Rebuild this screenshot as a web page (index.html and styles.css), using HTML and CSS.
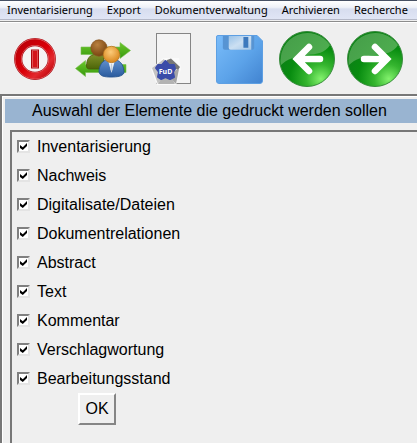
FILE: index.html
```
<!DOCTYPE html>
<html lang="de">
<head>
  <meta charset="UTF-8" />
  <meta name="viewport" content="width=device-width, initial-scale=1" />
  <title>FuD - Druckauswahl</title>
  <link rel="stylesheet" href="styles.css">
</head>
<body>
  <nav class="menubar">
    <button type="button">Inventarisierung</button>
    <button type="button">Export</button>
    <button type="button">Dokumentverwaltung</button>
    <button type="button">Archivieren</button>
    <button type="button">Recherche</button>
  </nav>

  <div class="toolbar">
    <button type="button" class="tool tool-power" aria-label="Beenden">
      <svg width="42" height="42" viewBox="0 0 42 42">
        <defs>
          <linearGradient id="red" x1="0" y1="0" x2="1" y2="1">
            <stop offset="0" stop-color="#b80008" />
            <stop offset="0.5" stop-color="#da0008" />
            <stop offset="0.75" stop-color="#e22a2e" />
            <stop offset="1" stop-color="#bc0008" />
          </linearGradient>
        </defs>
        <circle cx="21" cy="21" r="16.8" fill="#f5f3f3" stroke="#b01018" stroke-width="8.2" />
        <circle cx="21" cy="21" r="16.8" fill="none" stroke="#e87878" stroke-width="6.8" />
        <circle cx="21" cy="21" r="16.8" fill="none" stroke="url(#red)" stroke-width="5.8" />
        <rect x="17.5" y="12" width="7" height="18" fill="#f09090" stroke="#a80810" />
        <rect x="18.500" y="13" width="5" height="16" fill="#d4141a" />
      </svg>
    </button>
    <button type="button" class="tool tool-users" aria-label="Benutzer wechseln">
      <svg width="56" height="40" viewBox="0 0 56 40">
        <defs>
          <linearGradient id="arrow" x1="0" y1="0" x2="0" y2="1">
            <stop offset="0" stop-color="#6cc82c" />
            <stop offset="1" stop-color="#36980c" />
          </linearGradient>
          <radialGradient id="brown" cx="0.4" cy="0.3" r="0.7">
            <stop offset="0" stop-color="#b98040" />
            <stop offset="1" stop-color="#794510" />
          </radialGradient>
          <radialGradient id="orange" cx="0.45" cy="0.35" r="0.65">
            <stop offset="0" stop-color="#fccb7a" />
            <stop offset="1" stop-color="#d9861c" />
          </radialGradient>
          <linearGradient id="olive" x1="0" y1="0" x2="0" y2="1">
            <stop offset="0" stop-color="#80902a" />
            <stop offset="1" stop-color="#4c6508" />
          </linearGradient>
          <linearGradient id="shirt" x1="0" y1="0" x2="0" y2="1">
            <stop offset="0" stop-color="#608fcc" />
            <stop offset="1" stop-color="#2a5b9e" />
          </linearGradient>
        </defs>
        <path d="M6 8H45V3.500L55.500 11.500 45 19.500V15.500H6Z" fill="url(#arrow)" stroke="#79bd50" stroke-width="0.6" />
        <path d="M51 25.500H10.500V21.500L0.500 29.500 10.500 37.500V33.500H51Z" fill="url(#arrow)" stroke="#79bd50" stroke-width="0.6" />
        <path d="M11.500 27C11.500 20 15 15.500 20 15.500H29L29 30H15C12.500 30 11.500 29 11.500 27Z" fill="url(#olive)" stroke="#465808" stroke-width="0.8" />
        <circle cx="24" cy="9" r="8.200" fill="url(#brown)" stroke="#875320" stroke-width="0.7" />
        <path d="M24 33C24 26 28 21 32 21H41C46 22 49 27 49 34C47 37.500 42 38 36 38C30 38 25 37.500 24 33Z" fill="url(#shirt)" stroke="#275590" stroke-width="0.9" />
        <path d="M33.500 23L36.500 34 39.500 23Z" fill="#eef3f8" />
        <path d="M36 25H37L37.500 30 36.500 33 35.500 30Z" fill="#c2ccd8" />
        <circle cx="36.500" cy="15.500" r="8.200" fill="url(#orange)" stroke="#b97722" stroke-width="0.8" />
      </svg>
    </button>
    <button type="button" class="tool tool-document" aria-label="FuD-Dokument">
      <svg width="41" height="53" viewBox="0 0 41 53">
        <rect x="5.500" y="0.500" width="34" height="50" fill="#f4f4f4" stroke="#858585" />
        <path d="M12 25L28 25 30 36 25 52H6L0 36Z" fill="#fafafa" />
        <path d="M1 35L13 26 15 31 8 37 10 46 7 51Z" fill="#c3c3c3" />
        <path d="M16 27L20 25.500 29 34 27 37 16 32Z" fill="#777" />
        <path d="M28 36L25 51 20 46 23 38Z" fill="#a6a6a6" />
        <path d="M7 51L11 44H20L24 51Z" fill="#b3b3b3" />
        <path d="M14.500 28L18 32 23 32 24 36 22 39 23 44 19 46 14.500 44 10 46 7 44 8 39 5 35 7 32 11 32Z" fill="#3b4ca9" stroke="#3b4ca9" stroke-width="2" stroke-linejoin="round" />
        <text x="14.500" y="41" text-anchor="middle" class="fud-label">FuD</text>
      </svg>
    </button>
    <button type="button" class="tool tool-save" aria-label="Speichern">
      <svg width="47" height="49" viewBox="0 0 48 50">
        <defs>
          <linearGradient id="disk" x1="0" y1="0" x2="1" y2="1">
            <stop offset="0" stop-color="#7abcfa" />
            <stop offset="0.55" stop-color="#5ca3e9" />
            <stop offset="1" stop-color="#4183d0" />
          </linearGradient>
          <linearGradient id="metal" x1="0" y1="0" x2="1" y2="1">
            <stop offset="0" stop-color="#99c2e8" />
            <stop offset="0.5" stop-color="#cbdff2" />
            <stop offset="1" stop-color="#a4c7e8" />
          </linearGradient>
        </defs>
        <path d="M2 0.500H42L47.500 6V47Q47.500 49.500 45 49.500H3Q0.500 49.500 0.500 47V2Q0.500 0.500 2 0.500Z" fill="url(#disk)" stroke="#5b9ee2" />
        <path d="M7 1H39V13Q39 15 37 15H9Q7 15 7 13Z" fill="#5794d3" />
        <path d="M13 1H36V15H15Q13 15 13 13Z" fill="url(#metal)" />
        <rect x="28" y="2" width="5" height="11" fill="#3d79bd" />
      </svg>
    </button>
    <button type="button" class="tool tool-back" aria-label="Zurück">
      <svg width="56" height="56" viewBox="0 0 56 56">
        <defs>
          <radialGradient id="green" cx="0.75" cy="0.86" r="0.75">
            <stop offset="0" stop-color="#83f26d" />
            <stop offset="0.35" stop-color="#35b52f" />
            <stop offset="0.75" stop-color="#088c10" />
            <stop offset="1" stop-color="#0b8315" />
          </radialGradient>
          <linearGradient id="gloss" x1="0" y1="0" x2="1" y2="0.6">
            <stop offset="0" stop-color="#449c48" />
            <stop offset="1" stop-color="#4fae50" />
          </linearGradient>
        </defs>
        <circle cx="28" cy="28" r="27.500" fill="url(#green)" stroke="#398b3d" />
        <path d="M2 34A27 27 0 0 1 51 14C46 22 38 23 28 24C17 25 8 28 2 34Z" fill="url(#gloss)" />
        <path d="M30 16L18 28L30 40M19 28H41" fill="none" stroke="#fff" stroke-width="6.500" stroke-linecap="round" />
      </svg>
    </button>
    <button type="button" class="tool tool-next" aria-label="Weiter">
      <svg width="56" height="56" viewBox="0 0 56 56">
        <circle cx="28" cy="28" r="27.500" fill="url(#green)" stroke="#398b3d" />
        <path d="M2 34A27 27 0 0 1 51 14C46 22 38 23 28 24C17 25 8 28 2 34Z" fill="url(#gloss)" />
        <path d="M28 16L40 28L28 40M39 28H17" fill="none" stroke="#fff" stroke-width="6.500" stroke-linecap="round" />
      </svg>
    </button>
  </div>

  <main class="window">
    <h1>Auswahl der Elemente die gedruckt werden sollen</h1>

    <form class="options">
      <label><input type="checkbox" checked /> Inventarisierung</label>
      <label><input type="checkbox" checked /> Nachweis</label>
      <label><input type="checkbox" checked /> Digitalisate/Dateien</label>
      <label><input type="checkbox" checked /> Dokumentrelationen</label>
      <label><input type="checkbox" checked /> Abstract</label>
      <label><input type="checkbox" checked /> Text</label>
      <label><input type="checkbox" checked /> Kommentar</label>
      <label><input type="checkbox" checked /> Verschlagwortung</label>
      <label><input type="checkbox" checked /> Bearbeitungsstand</label>
      <button type="button" class="ok">OK</button>
    </form>
  </main>
</body>
</html>
```

FILE: styles.css
```
* {
  box-sizing: border-box;
}
body {
  margin: 0;
  min-height: 100vh;
  display: flex;
  flex-direction: column;
  overflow-x: hidden;
  background-color: #efefef;
  color: #000;
  font-family: "Liberation Sans", Arial, sans-serif;
  font-size: 16px;
}
button {
  font-family: inherit;
  color: inherit;
}

/* Menü */
.menubar {
  display: flex;
  flex-shrink: 0;
  gap: 14px;
  height: 20px;
  padding: 0 7px;
  border-top: 1px solid #465064;
  border-bottom: 1px solid #b4b8c8;
  background: linear-gradient(#fff 0%, #eef1f8 35%, #d7ddef 45%, #e0e5f5 100%);
  font-family: "Noto Sans", sans-serif;
}
.menubar button {
  padding: 0;
  border: none;
  background: none;
  font-size: 11px;
  line-height: 18px;
  white-space: nowrap;
}

/* Werkzeugleiste */
.toolbar {
  display: flex;
  flex-shrink: 0;
  align-items: center;
  height: 73px;
  margin-top: 1px;
  padding: 2px 0 0 14px;
  border-top: 1px solid #8c8c8c;
  box-shadow: inset 0 1px #fff;
}
.tool {
  flex-shrink: 0;
  padding: 0;
  border: none;
  background: none;
}
.tool svg {
  display: block;
}
.tool-users {
  margin-left: 19px;
}
.tool-document {
  margin-left: 20px;
}
.tool-save {
  margin-left: 24px;
}
.tool-back {
  margin-left: 16px;
}
.tool-next {
  margin-left: 12px;
}
.fud-label {
  fill: #fff;
  font-family: "Noto Sans", sans-serif;
  font-size: 7px;
  font-weight: bold;
}

/* Druckauswahl */
.window {
  display: flex;
  flex: 1;
  flex-direction: column;
  padding: 3px 0 0 3px;
  border-top: 2px solid #777;
  border-left: 2px solid #777;
  box-shadow: inset 1px 1px #fff;
}
h1 {
  margin: 0;
  padding-left: 27px;
  background-color: #99b4d1;
  font-size: 16px;
  font-weight: normal;
  line-height: 24px;
}
.options {
  flex: 1;
  margin: 7px 0 0 5px;
  padding: 0 5px;
  border-top: 2px solid #777;
  border-left: 2px solid #777;
}
.options label {
  display: flex;
  align-items: center;
  gap: 7px;
  height: 29px;
}
.options input {
  display: grid;
  place-items: center;
  width: 13px;
  height: 13px;
  margin: 0;
  appearance: none;
  border: 2px solid;
  border-color: #808080 #e4e4e4 #e4e4e4 #808080;
  background-color: #fff;
}
.options input:checked::before {
  content: "";
  width: 7px;
  height: 7px;
  background-color: #000;
  clip-path: polygon(0 28%, 40% 62%, 100% 0, 100% 42%, 40% 100%, 0 70%);
}
.ok {
  display: block;
  width: 38px;
  height: 32px;
  margin: 0 0 0 61px;
  padding: 0;
  border: 2px solid;
  border-color: #fff #858585 #858585 #fff;
  background-color: #efefef;
  font-size: 16px;
}
```
